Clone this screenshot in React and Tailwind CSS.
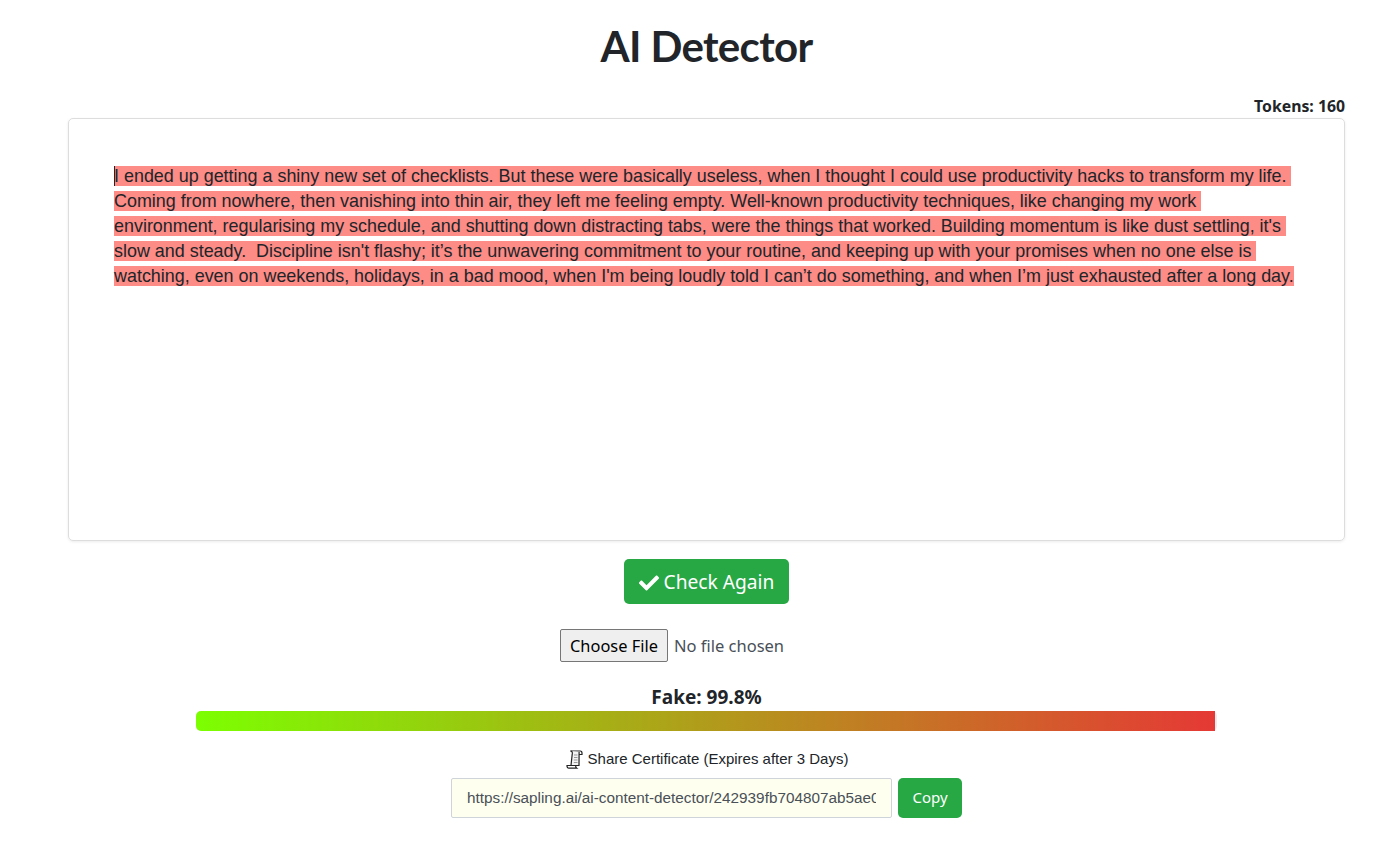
import React from 'react';
import { FaCheck } from 'react-icons/fa';

const segoe = "font-['Noto_Sans','Open_Sans',sans-serif]";

const detectedText =
  "I ended up getting a shiny new set of checklists. But these were basically useless, when I thought I could use productivity hacks to transform my life. Coming from nowhere, then vanishing into thin air, they left me feeling empty. Well-known productivity techniques, like changing my work environment, regularising my schedule, and shutting down distracting tabs, were the things that worked. Building momentum is like dust settling, it's slow and steady.  Discipline isn't flashy; it’s the unwavering commitment to your routine, and keeping up with your promises when no one else is watching, even on weekends, holidays, in a bad mood, when I'm being loudly told I can’t do something, and when I’m just exhausted after a long day.";

function ScrollIcon() {
  return (
    <svg width="17" height="19" viewBox="0 0 17 19" fill="none" stroke="#222" strokeWidth="1.2" aria-hidden="true">
      <path d="M4.5 1h9.8c1.1 0 1.7.9 1.7 2.2V4.5h-3" />
      <path d="M4.5 1c1.3 0 1.9 1.1 1.8 2.4L5 15.5h8l.1-13.6" fill="#f4f4f4" />
      <path d="M1 15.5h8.6c0 1.2.4 2.2 1.1 2.7H2.8C1.6 18.2.9 17 1 15.5Z" fill="#ffffff" />
      <path d="M8 5h3.5M8 7.5h3.5M7.8 10h3.7M7.8 12.5h3.7" stroke="#999" strokeWidth="1" />
    </svg>
  );
}

export default function App() {
  return (
    <div className={`min-h-[849px] bg-white pl-[68px] pr-[43px] text-[#212529] ${segoe}`}>
      <h1 className="pt-[16px] text-center font-['Lato',sans-serif] text-[42px] font-bold leading-[60px] tracking-[-0.65px]">
        AI Detector
      </h1>
      <div className="mt-[19px] pb-[1px] text-right text-[15.8px] font-bold leading-[22px]">Tokens: 160</div>
      <div className="h-[423px] rounded-[5px] border border-[#dddddd] px-[45px] pt-[45px] shadow-[0_1px_3px_rgba(0,0,0,0.08)]">
        <p className="relative whitespace-pre-wrap font-['Liberation_Sans',Arial,sans-serif] text-[17.93px] leading-[25px] text-[#212529]">
          <span className="bg-[#fd8b86]">{detectedText}</span>
          <span className="absolute left-0 top-[2px] h-[20px] w-[1px] bg-[#212529]" />
        </p>
      </div>
      <div className="mt-[18px] flex justify-center">
        <button className="flex h-[45px] w-[165px] items-center justify-center gap-[5px] rounded-[5px] bg-[#28a745] pt-[2px] text-[19.2px] text-white">
          <FaCheck className="h-[20px] w-[20px]" />
          Check Again
        </button>
      </div>
      <div className="mt-[25px] flex h-[33px] items-center justify-center pr-[69px] text-[16.5px] text-[#495057]">
        <button className="h-[33px] w-[108px] rounded-[2px] border border-[#767676] bg-[#efefef] pt-[1px] text-[16.4px] text-black">
          Choose File
        </button>
        <span className="ml-[6px] pt-[1px]">No file chosen</span>
      </div>
      <div className="mt-[22px] text-center text-[19px] font-bold leading-[27px]">Fake: 99.8%</div>
      <div className="mx-auto h-[20px] w-[80%] rounded-[5px] bg-[#e9ecef]">
        <div className="h-full w-[99.8%] rounded-l-[5px] bg-[linear-gradient(to_right,#7cff01,#e53935)]" />
      </div>
      <div className="mt-[18px] flex items-center justify-center gap-[5px] pl-[1px] font-['Liberation_Sans',Arial,sans-serif] text-[15px] leading-[20px]">
        <ScrollIcon />
        Share Certificate (Expires after 3 Days)
      </div>
      <div className="mt-[9px] flex justify-center gap-[6px]">
        <input
          readOnly
          value="https://sapling.ai/ai-content-detector/242939fb704807ab5ae0a1c2"
          className="h-[40px] w-[441px] rounded-[2px] border border-[#ced4da] bg-[#fffff0] px-[15px] font-['Liberation_Sans',Arial,sans-serif] text-[15.3px] text-[#495057] outline-none"
        />
        <button className="h-[40px] w-[64px] rounded-[5px] bg-[#28a745] pb-[1px] text-[15px] text-white">Copy</button>
      </div>
    </div>
  );
}
